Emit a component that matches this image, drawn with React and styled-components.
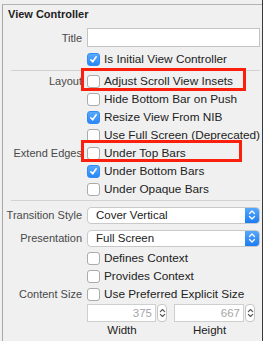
import React from 'react'
import styled, { createGlobalStyle } from 'styled-components'

const GlobalStyle = createGlobalStyle`
	html, body {
		margin: 0;
		padding: 0;
		background: #f0f0f0;
	}
	body {
		font-family: 'Liberation Sans', Arial, sans-serif;
		font-size: 11px;
		color: #222;
	}
`

const Frame = styled.div`
	width: 263px;
	height: 341px;
	box-sizing: border-box;
	padding: 4px 0 0 2px;
	border-right: 1px solid #3a3a3a;
	background: #f0f0f0;
	overflow: hidden;
`

const Panel = styled.div`
	position: relative;
	height: 100%;
	box-sizing: border-box;
	border-left: 1px solid #a8a8a8;
	border-top: 1px solid #b4b4b4;
	padding: 0 8px 0 0;
`

const Header = styled.div`
	font-weight: bold;
	font-size: 11px;
	line-height: 14px;
	padding: 2px 0 0 5px;
	color: #222;
`

const Form = styled.div`
	display: grid;
	grid-template-columns: 79px 1fr;
	column-gap: 5px;
	align-items: center;
`

const Label = styled.div`
	text-align: right;
	color: #484848;
	white-space: nowrap;
	line-height: 18px;
`

const Cell = styled.div`
	position: relative;
	display: flex;
	align-items: center;
	height: ${p => p.$h || 18}px;
	margin-top: ${p => p.$mt || 0}px;
`

const TextInput = styled.div`
	flex: 1;
	height: 19px;
	box-sizing: border-box;
	background: #fff;
	border: 1px solid #c4c4c4;
`

const Box = styled.span`
	width: 13px;
	height: 13px;
	box-sizing: border-box;
	border-radius: 3px;
	border: 1px solid ${p => (p.$on ? '#2f8cf6' : '#ababab')};
	background: ${p => (p.$on ? 'linear-gradient(#5aa9fb, #2b86f5)' : '#fff')};
	display: flex;
	align-items: center;
	justify-content: center;
	margin-right: 4px;
	flex-shrink: 0;
`

const CheckText = styled.span`
	white-space: nowrap;
	color: #222;
	font-size: 11.8px;
`

const Separator = styled.div`
	grid-column: 1 / -1;
	height: 1px;
	background: #d2d2d2;
	margin: ${p => p.$m};
	margin-left: 8px;
`

const Highlight = styled.div`
	position: absolute;
	left: -6px;
	top: ${p => p.$top}px;
	width: ${p => p.$w}px;
	height: ${p => p.$h}px;
	box-sizing: border-box;
	border: 3px solid #fb1f0d;
	pointer-events: none;
`

const Popup = styled.div`
	flex: 1;
	height: 17px;
	box-sizing: border-box;
	display: flex;
	align-items: center;
	background: #fff;
	border: 1px solid #c9c9c9;
	border-radius: 4px;
	overflow: hidden;
`

const PopupText = styled.span`
	flex: 1;
	padding-left: 8px;
	color: #222;
	font-size: 11.5px;
`

const PopupArrows = styled.span`
	width: 14px;
	align-self: stretch;
	background: linear-gradient(#56a8fd, #1c7cf4);
	display: flex;
	align-items: center;
	justify-content: center;
`

const SizeRow = styled.div`
	display: flex;
	gap: 7px;
	margin-top: 1px;
`

const SizeGroup = styled.div`
	display: flex;
	flex-direction: column;
	align-items: center;
	width: ${p => p.$w}px;
`

const SizeFieldRow = styled.div`
	display: flex;
	align-items: center;
	gap: 1px;
	width: 100%;
`

const NumberField = styled.div`
	flex: 1;
	height: 18px;
	box-sizing: border-box;
	background: #fff;
	border: 1px solid #cfcfcf;
	color: #a6a6a6;
	text-align: right;
	padding-right: 3px;
	line-height: 16px;
	font-size: 11.5px;
`

const Stepper = styled.div`
	width: 10px;
	height: 18px;
	box-sizing: border-box;
	border: 1px solid #c6c6c6;
	border-radius: 4px;
	background: #fff;
	display: flex;
	align-items: center;
	justify-content: center;
`

const SizeLabel = styled.div`
	line-height: 14px;
	margin-top: 1px;
	margin-right: 10px;
	color: #222;
	font-size: 11.5px;
`

const Tick = () => (
	<svg width="9" height="9" viewBox="0 0 9 9">
		<path d="M1.8 4.8 L3.7 6.8 L7.2 1.8" fill="none" stroke="#fff" strokeWidth="1.6" strokeLinecap="round" strokeLinejoin="round" />
	</svg>
)

const Chevrons = ({ color = '#fff', w = 8 }) => (
	<svg width={w} height="12" viewBox="0 0 8 12">
		<path d="M1.5 4.5 L4 2 L6.5 4.5 M1.5 7.5 L4 10 L6.5 7.5" fill="none" stroke={color} strokeWidth="1.3" strokeLinecap="round" strokeLinejoin="round" />
	</svg>
)

const Check = ({ on, children }) => (
	<>
		<Box $on={on}>{on && <Tick />}</Box>
		<CheckText>{children}</CheckText>
	</>
)

const CheckRow = ({ label, on, text, highlight }) => (
	<>
		<Label>{label}</Label>
		<Cell>
			<Check on={on}>{text}</Check>
			{highlight && <Highlight {...highlight} />}
		</Cell>
	</>
)

export default function App() {
	return (
		<Frame>
			<GlobalStyle />
			<Panel>
				<Header>View Controller</Header>
				<Form>
					<Label style={{ marginTop: 7 }}>Title</Label>
					<Cell $h={19} $mt={7}>
						<TextInput />
					</Cell>
					<Label />
					<Cell $mt={3}>
						<Check on>Is Initial View Controller</Check>
					</Cell>
					<Separator $m="2px 0 1px" />
					<CheckRow label="Layout" text="Adjust Scroll View Insets" highlight={{ $top: -4, $w: 165, $h: 23 }} />
					<CheckRow text="Hide Bottom Bar on Push" />
					<CheckRow on text="Resize View From NIB" />
					<CheckRow text="Use Full Screen (Deprecated)" />
					<CheckRow label="Extend Edges" text="Under Top Bars" highlight={{ $top: -4, $w: 161, $h: 22 }} />
					<CheckRow on text="Under Bottom Bars" />
					<CheckRow text="Under Opaque Bars" />
					<Separator $m="2px 0 5px" />
					<Label>Transition Style</Label>
					<Cell $h={17}>
						<Popup>
							<PopupText>Cover Vertical</PopupText>
							<PopupArrows>
								<Chevrons />
							</PopupArrows>
						</Popup>
					</Cell>
					<Label style={{ marginTop: 5 }}>Presentation</Label>
					<Cell $h={17} $mt={5}>
						<Popup>
							<PopupText>Full Screen</PopupText>
							<PopupArrows>
								<Chevrons />
							</PopupArrows>
						</Popup>
					</Cell>
					<Label />
					<Cell $mt={2}>
						<Check>Defines Context</Check>
					</Cell>
					<CheckRow text="Provides Context" />
					<CheckRow label="Content Size" text="Use Preferred Explicit Size" />
					<Label />
					<SizeRow>
						<SizeGroup $w={80}>
							<SizeFieldRow>
								<NumberField>375</NumberField>
								<Stepper>
									<Chevrons color="#555" w={7} />
								</Stepper>
							</SizeFieldRow>
							<SizeLabel>Width</SizeLabel>
						</SizeGroup>
						<SizeGroup $w={81}>
							<SizeFieldRow>
								<NumberField>667</NumberField>
								<Stepper>
									<Chevrons color="#555" w={7} />
								</Stepper>
							</SizeFieldRow>
							<SizeLabel>Height</SizeLabel>
						</SizeGroup>
					</SizeRow>
				</Form>
			</Panel>
		</Frame>
	)
}
